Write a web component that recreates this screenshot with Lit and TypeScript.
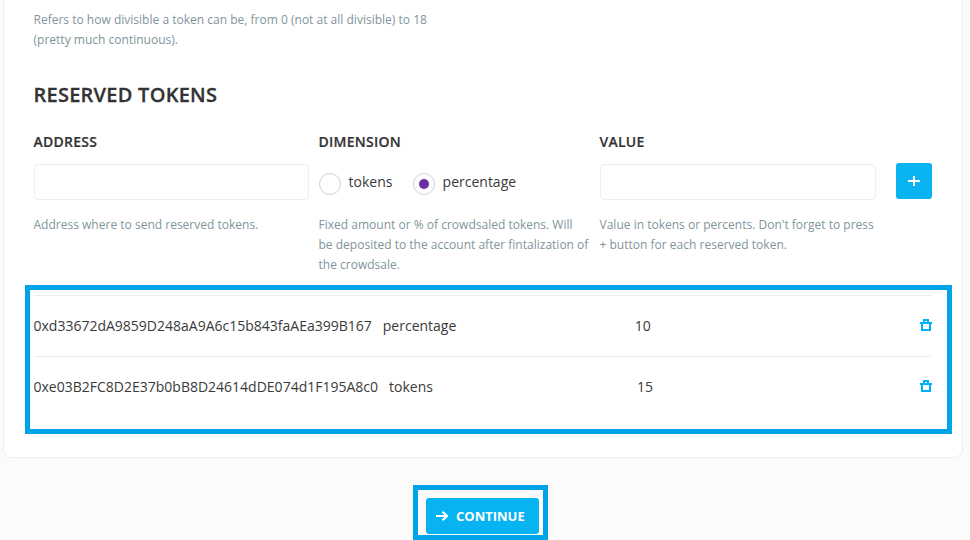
import { LitElement, html, css } from "lit";
import { customElement, property } from "lit/decorators.js";

const trashIcon = html`<svg width="12" height="12" viewBox="0 0 12 12" shape-rendering="crispEdges">
  <path fill="#00b0f8" fill-rule="evenodd" d="M3 0H9V3H12V5H11V12H1V5H0V3H3ZM5 2V3H7V2ZM3 5V10H9V5Z" />
</svg>`;

@customElement("reserved-row")
class ReservedRow extends LitElement {
  @property() addr = "";
  @property() dim = "";
  @property() value = "";

  static styles = css`
    :host {
      display: flex;
      align-items: center;
      height: 61px;
      padding-bottom: 1px;
      border-top: 1px solid #eeeeee;
      font-size: 14px;
      color: #3a3a3a;
    }
    .addr { margin: 0 11px 0 -0.5px; white-space: nowrap; }
    .dim { width: 252px; }
    .dim.tokens { width: 248px; }
    .value { flex: 1; }
    .trash { display: flex; margin-top: -1px; }
  `;

  render() {
    return html`
      <span class="addr">${this.addr}</span>
      <span class="dim ${this.dim}">${this.dim}</span>
      <span class="value">${this.value}</span>
      <span class="trash">${trashIcon}</span>
    `;
  }
}

@customElement("app-root")
class AppRoot extends LitElement {
  static styles = css`
    :host {
      display: block;
      position: relative;
      width: 970px;
      height: 540px;
      overflow: hidden;
      background: #fbfbfb;
      font-family: "Open Sans", "Noto Sans", sans-serif;
      color: #333;
    }
    * { box-sizing: border-box; }
    .card {
      width: 960px;
      height: 458px;
      margin-left: 3px;
      padding: 10px 30px 0;
      background: #fff;
      border: 1px solid #eeeeee;
      border-top: 0;
      border-radius: 0 0 9px 9px;
    }
    p {
      margin: 0 0 0 -0.5px;
      font-size: 12px;
      line-height: 20px;
      letter-spacing: 0.01px;
      color: #7f959c;
      white-space: nowrap;
    }
    h2 {
      margin: 31px 0 0 -0.5px;
      font-size: 20px;
      line-height: 28px;
      font-weight: 600;
      letter-spacing: 0.25px;
      -webkit-text-stroke: 0.3px #333;
    }
    .columns { display: flex; margin-top: 23px; height: 163px; }
    .col { width: 275px; margin-right: 10px; }
    .col.mid { width: 271px; }
    .col.value { width: 276px; margin-right: 20px; }
    label.title {
      display: block;
      margin-left: -0.5px;
      font-size: 14px;
      font-weight: 600;
      line-height: 20px;
      letter-spacing: 0.25px;
      -webkit-text-stroke: 0.2px #333;
    }
    input.text {
      display: block;
      width: 100%;
      height: 36px;
      margin: 12px 0 15px;
      border: 1px solid #eeeeee;
      border-radius: 4px;
      background: #fff;
    }
    .radios { display: flex; height: 36px; margin: 12px 0 15px; padding-top: 9px; font-size: 14px; }
    .radio { display: flex; line-height: 18px; color: #3a3a3a; }
    .radio + .radio { margin-left: 20.7px; }
    .dot {
      display: flex;
      align-items: center;
      justify-content: center;
      width: 22px;
      height: 22px;
      margin-right: 7.5px;
      border: 1px solid #ccd2d8;
      border-radius: 50%;
    }
    .dot.on::after {
      content: "";
      width: 10px;
      height: 10px;
      border-radius: 50%;
      background: #6a2fa0;
    }
    .add {
      display: flex;
      align-items: center;
      justify-content: center;
      width: 36px;
      height: 36px;
      margin-top: 31px;
      padding: 0;
      border: 0;
      border-radius: 3px;
      background: #08b3f2;
    }
    .actions { display: flex; padding: 40px 0 0 426px; }
    .continue {
      display: flex;
      align-items: center;
      width: 113px;
      height: 36px;
      padding: 0 0 0 10px;
      gap: 8px;
      border: 0;
      border-radius: 3px;
      background: #08b3f2;
      color: #fff;
      font: 700 13px/36px "Open Sans", "Noto Sans", sans-serif;
      white-space: nowrap;
    }
    .mark { position: absolute; border: 5px solid #00a2e8; }
    .mark.list { left: 25px; top: 285px; width: 927px; height: 149px; }
    .mark.button { left: 413px; top: 485px; width: 135px; height: 55px; }
  `;

  render() {
    return html`
      <section class="card">
        <p>Refers to how divisible a token can be, from 0 (not at all divisible) to 18<br />(pretty much continuous).</p>
        <h2>RESERVED TOKENS</h2>
        <div class="columns">
          <div class="col">
            <label class="title">ADDRESS</label>
            <input class="text" />
            <p>Address where to send reserved tokens.</p>
          </div>
          <div class="col mid">
            <label class="title">DIMENSION</label>
            <div class="radios">
              <span class="radio"><i class="dot"></i><span>tokens</span></span>
              <span class="radio"><i class="dot on"></i><span>percentage</span></span>
            </div>
            <p>Fixed amount or % of crowdsaled tokens. Will<br />be deposited to the account after fintalization of<br />the crowdsale.</p>
          </div>
          <div class="col value">
            <label class="title">VALUE</label>
            <input class="text" />
            <p>Value in tokens or percents. Don't forget to press<br />+ button for each reserved token.</p>
          </div>
          <button class="add">
            <svg width="12" height="10" viewBox="0 0 12 10" shape-rendering="crispEdges"><path d="M0 4H12V6H0ZM5 0H7V10H5Z" fill="#fff" /></svg>
          </button>
        </div>
        <reserved-row addr="0xd33672dA9859D248aA9A6c15b843faAEa399B167" dim="percentage" value="10"></reserved-row>
        <reserved-row addr="0xe03B2FC8D2E37b0bB8D24614dDE074d1F195A8c0" dim="tokens" value="15"></reserved-row>
      </section>
      <div class="actions">
        <button class="continue">
          <svg width="12" height="10" viewBox="0 0 12 10" fill="none" stroke="#fff" stroke-width="2"><path d="M0 5H11M6.5 0.7L11 5L6.5 9.3" /></svg>
          <span>CONTINUE</span>
        </button>
      </div>
      <div class="mark list"></div>
      <div class="mark button"></div>
    `;
  }
}
